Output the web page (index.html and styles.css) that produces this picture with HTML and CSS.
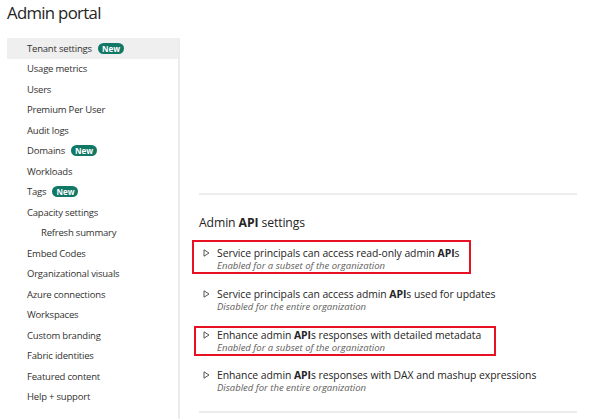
FILE: index.html
```html
<!DOCTYPE html>
<html>
<head>
<meta charset="utf-8">
<link rel="stylesheet" href="styles.css">
</head>
<body>
<div class="page">
  <h1 class="title">Admin portal</h1>
  <div class="layout">
    <nav class="sidebar">
      <div class="nav-item active">Tenant settings <span class="badge">New</span></div>
      <div class="nav-item">Usage metrics</div>
      <div class="nav-item">Users</div>
      <div class="nav-item">Premium Per User</div>
      <div class="nav-item">Audit logs</div>
      <div class="nav-item">Domains <span class="badge">New</span></div>
      <div class="nav-item">Workloads</div>
      <div class="nav-item">Tags <span class="badge">New</span></div>
      <div class="nav-item">Capacity settings</div>
      <div class="nav-item sub">Refresh summary</div>
      <div class="nav-item">Embed Codes</div>
      <div class="nav-item">Organizational visuals</div>
      <div class="nav-item">Azure connections</div>
      <div class="nav-item">Workspaces</div>
      <div class="nav-item">Custom branding</div>
      <div class="nav-item">Fabric identities</div>
      <div class="nav-item">Featured content</div>
      <div class="nav-item">Help + support</div>
    </nav>
    <main class="main">
      <div class="spacer"></div>
      <section class="section">
        <h2 class="section-title">Admin <b>API</b> settings</h2>
        <div class="setting highlighted first">
          <svg class="caret" width="7" height="8" viewBox="0 0 7 8"><path d="M1 0.8 L6 4 L1 7.2 Z" fill="none" stroke="#555" stroke-width="1"/></svg>
          <div class="setting-text">
            <div class="setting-name">Service principals can access read-only admin <b>API</b>s</div>
            <div class="setting-status">Enabled for a subset of the organization</div>
          </div>
        </div>
        <div class="setting">
          <svg class="caret" width="7" height="8" viewBox="0 0 7 8"><path d="M1 0.8 L6 4 L1 7.2 Z" fill="none" stroke="#555" stroke-width="1"/></svg>
          <div class="setting-text">
            <div class="setting-name">Service principals can access admin <b>API</b>s used for updates</div>
            <div class="setting-status">Disabled for the entire organization</div>
          </div>
        </div>
        <div class="setting highlighted second">
          <svg class="caret" width="7" height="8" viewBox="0 0 7 8"><path d="M1 0.8 L6 4 L1 7.2 Z" fill="none" stroke="#555" stroke-width="1"/></svg>
          <div class="setting-text">
            <div class="setting-name">Enhance admin <b>API</b>s responses with detailed metadata</div>
            <div class="setting-status">Enabled for a subset of the organization</div>
          </div>
        </div>
        <div class="setting last">
          <svg class="caret" width="7" height="8" viewBox="0 0 7 8"><path d="M1 0.8 L6 4 L1 7.2 Z" fill="none" stroke="#555" stroke-width="1"/></svg>
          <div class="setting-text">
            <div class="setting-name">Enhance admin <b>API</b>s responses with DAX and mashup expressions</div>
            <div class="setting-status">Disabled for the entire organization</div>
          </div>
        </div>
      </section>
    </main>
  </div>
</div>
</body>
</html>
```

FILE: styles.css
```css
* { box-sizing: border-box; }
html, body { margin: 0; padding: 0; background: #fff; }
body {
  font-family: "Open Sans", "Noto Sans", sans-serif;
  color: #252423;
  width: 601px;
  height: 419px;
  overflow: hidden;
}
.page { padding: 0 0 0 7px; }
.title {
  margin: 0;
  font-size: 16.8px;
  font-weight: 400;
  height: 38px;
  line-height: 25px;
  color: #252423;
  letter-spacing: -0.7px;
}
.layout { display: flex; }
.sidebar {
  width: 173px;
  border-right: 2px solid #ececec;
  padding-bottom: 20px;
  flex-shrink: 0;
}
.nav-item {
  height: 20.5px;
  display: flex;
  align-items: center;
  padding-left: 20px;
  font-size: 9.5px;
  letter-spacing: -0.2px;
  color: #323130;
}
.nav-item.active { background: #efefef; }
.nav-item.sub { padding-left: 34px; }
.badge {
  display: inline-block;
  margin-left: 6px;
  background: #117865;
  color: #fff;
  font-weight: 700;
  font-size: 8px;
  letter-spacing: 0;
  line-height: 11px;
  height: 11px;
  padding: 0 4px;
  border-radius: 6px;
}
.main {
  flex: 1;
  padding: 0 24px 0 19px;
}
.spacer { height: 157px; border-bottom: 2px solid #ececec; }
.section {
  padding-top: 19px;
  border-bottom: 2px solid #ececec;
  padding-bottom: 8px;
}
.section-title {
  margin: 0 0 8px 0;
  font-size: 12.2px;
  font-weight: 400;
  line-height: 18px;
  letter-spacing: -0.1px;
  color: #252423;
}
.section-title b { font-weight: 700; }
.setting {
  display: flex;
  align-items: flex-start;
  margin-left: -7px;
  padding: 4px 6px 0 9px;
  border: 2px solid transparent;
  height: 34px;
  margin-bottom: 7px;
}
.setting.first { width: 279px; }
.setting.second {
  width: 302px;
  margin-left: -5px;
  padding: 0 6px 0 7px;
  margin-top: 11px;
  height: 30px;
  margin-bottom: 6px;
}
.highlighted { border-color: #e81123; }
.caret { margin-top: 3px; margin-right: 7px; flex-shrink: 0; }
.setting-name {
  font-size: 10.4px;
  line-height: 14px;
  letter-spacing: -0.05px;
  color: #252423;
  white-space: nowrap;
}
.setting-name b { font-weight: 700; }
.setting-status {
  font-size: 9.5px;
  font-style: italic;
  color: #605e5c;
  line-height: 12px;
  white-space: nowrap;
}
```
